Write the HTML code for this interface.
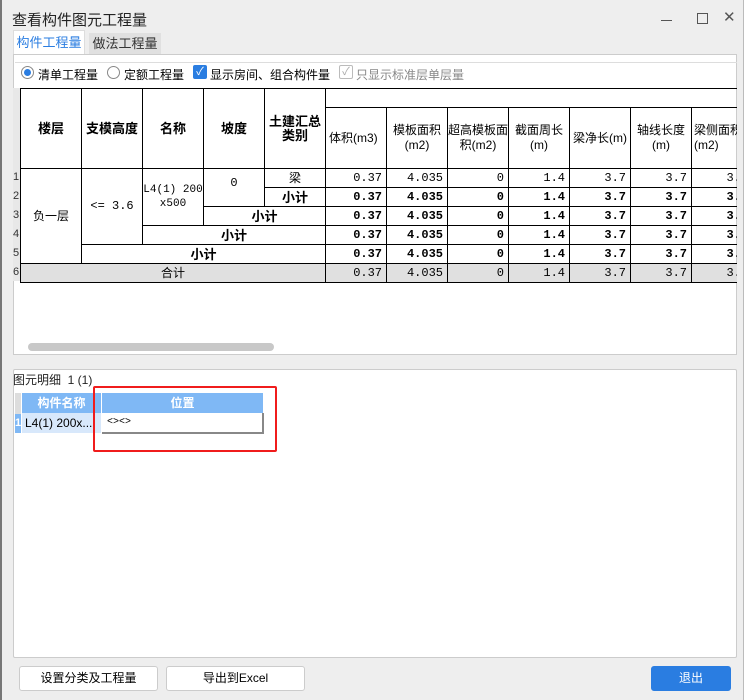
<!DOCTYPE html>
<html><head><meta charset="utf-8"><style>
*{margin:0;padding:0;box-sizing:border-box}
body{width:750px;height:700px;overflow:hidden;background:#fff;font-family:"Liberation Sans","Noto Sans CJK SC",sans-serif;font-size:12px;color:#000;position:relative}
.win{position:absolute;left:0;top:0;width:744px;height:700px;background:#eeeeee;border-right:1px solid #bbb}
.lb{position:absolute;left:0;top:0;width:2px;height:700px;background:#777}
.abs{position:absolute;white-space:nowrap}
table{border-collapse:collapse;table-layout:fixed;position:absolute;left:20px;top:88px;width:732px}
td{border:1px solid #000;text-align:center;font-size:12px;height:19px;padding:0;line-height:17px;overflow:hidden;white-space:nowrap}
.h{font-weight:bold;font-size:13px}
.hd{white-space:normal;line-height:15px;font-size:12px}
.n{text-align:right;padding-right:4px;font-family:"Liberation Mono",monospace;font-size:12px}
.b td.n{font-weight:bold}
.g td{background:#e0e0e0}
.rn{position:absolute;left:13px;width:7px;font-size:11px;color:#333}
.btn{position:absolute;top:666px;height:25px;border:1px solid #ccc;border-radius:3px;background:#fff;text-align:center;line-height:23px;font-size:12px}
</style></head><body>
<div class="win">
<div class="lb"></div>
<div class="abs" style="left:12px;top:9px;font-size:15px;color:#222">查看构件图元工程量</div>
<div class="abs" style="left:661px;top:20px;width:11px;height:1px;background:#555"></div>
<div class="abs" style="left:697px;top:13px;width:11px;height:11px;border:1px solid #555"></div>
<div class="abs" style="left:723px;top:9px;font-size:15px;color:#555;line-height:18px">✕</div>
<div class="abs" style="left:13px;top:30px;width:72px;height:25px;background:#fff;border:1px solid #ddd;border-bottom:none;color:#2a7de1;font-size:13px;text-align:center;line-height:24px">构件工程量</div>
<div class="abs" style="left:89px;top:33px;width:72px;height:21px;background:#e0e0e0;color:#333;font-size:13px;text-align:center;line-height:21px">做法工程量</div>
<div class="abs" style="left:13px;top:54px;width:724px;height:301px;background:#fff;border:1px solid #ccc"></div>
<div class="abs" style="left:15px;top:62px;width:722px;height:25px;border-top:1px solid #ddd"></div>
<div class="abs" style="left:21px;top:66px;width:13px;height:13px;border:1px solid #888;border-radius:50%"><div style="margin:2px;width:7px;height:7px;border-radius:50%;background:#2a7de1"></div></div>
<div class="abs" style="left:38px;top:66px;font-size:12px">清单工程量</div>
<div class="abs" style="left:107px;top:66px;width:13px;height:13px;border:1px solid #888;border-radius:50%"></div>
<div class="abs" style="left:124px;top:66px;font-size:12px">定额工程量</div>
<div class="abs" style="left:193px;top:65px;width:14px;height:14px;background:#2a7de1;border-radius:2px;color:#fff;font-size:11px;line-height:14px;text-align:center">✓</div>
<div class="abs" style="left:210px;top:66px;font-size:12px">显示房间、组合构件量</div>
<div class="abs" style="left:339px;top:65px;width:14px;height:14px;border:1px solid #bbb;border-radius:2px;color:#aaa;font-size:11px;line-height:12px;text-align:center">✓</div>
<div class="abs" style="left:356px;top:66px;font-size:12px;color:#888">只显示标准层单层量</div>
<div class="abs" style="left:13px;top:88px;width:7px;height:193px;background:#e8e8e8"></div>
<div class="abs" style="left:0;top:88px;width:737px;height:266px;overflow:hidden">
<table style="left:20px;top:0">
<colgroup><col width="61"><col width="61"><col width="61"><col width="61"><col width="61"><col width="61"><col width="61"><col width="61"><col width="61"><col width="61"><col width="61"><col width="61"></colgroup>
<tr style="height:18px"><td rowspan="2" class="h">楼层</td><td rowspan="2" class="h">支模高度</td><td rowspan="2" class="h">名称</td><td rowspan="2" class="h">坡度</td><td rowspan="2" class="h" style="white-space:normal;line-height:14px">土建汇总类别</td><td colspan="7" style="border-right:none"></td></tr>
<tr style="height:61px"><td style="text-align:left;padding-left:3px">体积(m3)</td><td class="hd">模板面积(m2)</td><td class="hd">超高模板面积(m2)</td><td class="hd">截面周长(m)</td><td>梁净长(m)</td><td class="hd">轴线长度(m)</td><td class="hd" style="text-align:left;padding-left:2px">梁侧面积(m2)</td></tr>
<tr><td rowspan="5">负一层</td><td rowspan="4" style="font-family:'Liberation Mono',monospace;font-size:12px">&lt;= 3.6</td><td rowspan="3" style="white-space:normal;font-family:'Liberation Mono',monospace;font-size:11px;line-height:14px">L4(1) 200<br>x500</td><td rowspan="2" style="vertical-align:top;font-family:'Liberation Mono',monospace;font-size:12px;padding-top:6px">0</td><td>梁</td><td class="n">0.37</td><td class="n">4.035</td><td class="n">0</td><td class="n">1.4</td><td class="n">3.7</td><td class="n">3.7</td><td class="n">3.7</td></tr>
<tr class="b"><td class="h">小计</td><td class="n">0.37</td><td class="n">4.035</td><td class="n">0</td><td class="n">1.4</td><td class="n">3.7</td><td class="n">3.7</td><td class="n">3.7</td></tr>
<tr class="b"><td colspan="2" class="h">小计</td><td class="n">0.37</td><td class="n">4.035</td><td class="n">0</td><td class="n">1.4</td><td class="n">3.7</td><td class="n">3.7</td><td class="n">3.7</td></tr>
<tr class="b"><td colspan="3" class="h">小计</td><td class="n">0.37</td><td class="n">4.035</td><td class="n">0</td><td class="n">1.4</td><td class="n">3.7</td><td class="n">3.7</td><td class="n">3.7</td></tr>
<tr class="b"><td colspan="4" class="h">小计</td><td class="n">0.37</td><td class="n">4.035</td><td class="n">0</td><td class="n">1.4</td><td class="n">3.7</td><td class="n">3.7</td><td class="n">3.7</td></tr>
<tr class="g"><td colspan="5">合计</td><td class="n">0.37</td><td class="n">4.035</td><td class="n">0</td><td class="n">1.4</td><td class="n">3.7</td><td class="n">3.7</td><td class="n">3.7</td></tr>
</table>
</div>
<div class="rn" style="top:171px">1</div><div class="rn" style="top:190px">2</div><div class="rn" style="top:209px">3</div><div class="rn" style="top:228px">4</div><div class="rn" style="top:247px">5</div><div class="rn" style="top:266px">6</div>
<div class="abs" style="left:28px;top:343px;width:246px;height:8px;background:#c8c8c8;border-radius:4px"></div>
<div class="abs" style="left:13px;top:369px;width:724px;height:289px;background:#fff;border:1px solid #ccc;border-radius:2px"></div>
<div class="abs" style="left:13px;top:371px;font-size:12px;color:#222">图元明细&nbsp; 1 (1)</div>
<div class="abs" style="left:15px;top:393px;width:6px;height:40px;background:#ddd"></div>
<div class="abs" style="left:15px;top:414px;width:6px;height:19px;background:#7fb8f5;color:#fff;font-size:11px;font-weight:bold;text-align:center;line-height:19px">1</div>
<div class="abs" style="left:22px;top:393px;width:79px;height:20px;background:#7fb8f5;color:#fff;font-weight:bold;text-align:center;line-height:20px;font-size:12px">构件名称</div>
<div class="abs" style="left:102px;top:393px;width:161px;height:20px;background:#7fb8f5;color:#fff;font-weight:bold;text-align:center;line-height:20px;font-size:12px">位置</div>
<div class="abs" style="left:22px;top:413px;width:79px;height:20px;background:#d8e8fb;line-height:20px;padding-left:3px;font-size:12px;overflow:hidden">L4(1) 200x...</div>
<div class="abs" style="left:102px;top:413px;width:162px;height:21px;background:#fff;border-right:2px solid #888;border-bottom:2px solid #888;line-height:20px;padding-left:5px;font-size:10px;font-family:'Liberation Mono',monospace">&lt;&gt;&lt;&gt;</div>
<div class="abs" style="left:93px;top:386px;width:184px;height:66px;border:2px solid #f01c1c;border-radius:2px"></div>
<div class="btn" style="left:19px;width:139px">设置分类及工程量</div>
<div class="btn" style="left:166px;width:139px">导出到Excel</div>
<div class="btn" style="left:651px;width:80px;background:#2a7de1;border-color:#2a7de1;color:#fff">退出</div>
</div>
</body></html>
